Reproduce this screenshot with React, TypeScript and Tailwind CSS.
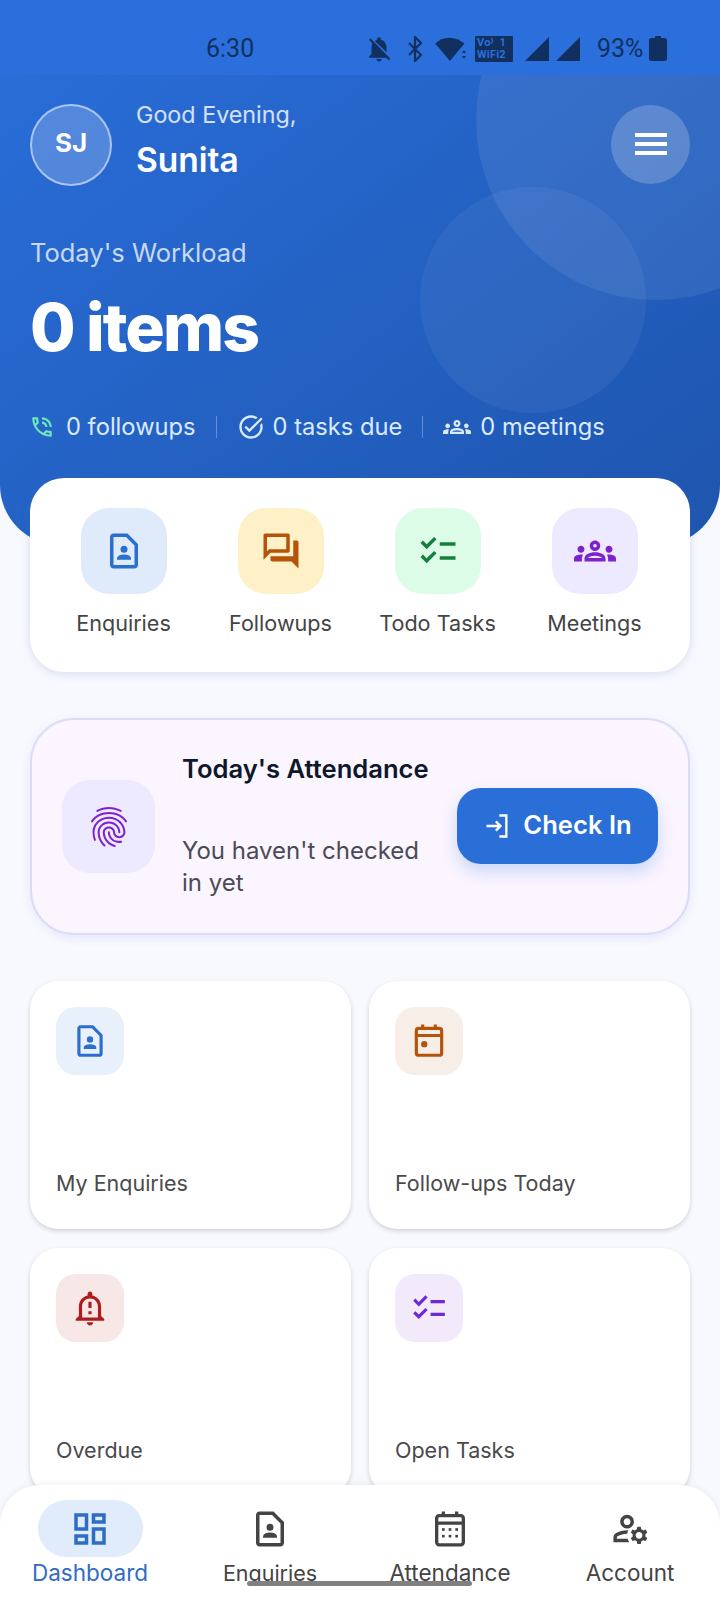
import React from "react";

const FONT = "font-['Inter','Liberation_Sans',sans-serif]";

const CONTACT = "M14 2H6c-1.1 0-2 .9-2 2v16c0 1.1.9 2 2 2h12c1.1 0 2-.9 2-2V8l-6-6zm4 18H6V4h7.17L18 8.83V20zm-6-7a2 2 0 1 0 0-4 2 2 0 0 0 0 4zm4 3.43c0-.81-.48-1.53-1.22-1.85A6.95 6.95 0 0 0 12 14c-1.01 0-1.97.21-2.78.58A2.01 2.01 0 0 0 8 16.43V17h8v-.57z";
const FORUM = "M15 4v7H5.17L4 12.17V4h11m1-2H3c-.55 0-1 .45-1 1v14l4-4h10c.55 0 1-.45 1-1V3c0-.55-.45-1-1-1zm5 4h-2v9H6v2c0 .55.45 1 1 1h11l4 4V7c0-.55-.45-1-1-1z";
const CHECKLIST = "M22 7h-9v2h9V7zm0 8h-9v2h9v-2zM5.54 11 2 7.46l1.41-1.41 2.12 2.12 4.24-4.24 1.41 1.41L5.54 11zm0 8L2 15.46l1.41-1.41 2.12 2.12 4.24-4.24 1.41 1.41L5.54 19z";
const GROUPS = "M4 13c1.1 0 2-.9 2-2s-.9-2-2-2-2 .9-2 2 .9 2 2 2zm1.13 1.1c-.37-.06-.74-.1-1.13-.1-.99 0-1.93.21-2.78.58C.48 14.9 0 15.62 0 16.43V18h4.5v-1.61c0-.83.23-1.61.63-2.29zM20 13c1.1 0 2-.9 2-2s-.9-2-2-2-2 .9-2 2 .9 2 2 2zm4 3.43c0-.81-.48-1.53-1.22-1.85-.85-.37-1.79-.58-2.78-.58-.39 0-.76.04-1.13.1.4.68.63 1.46.63 2.29V18H24v-1.57zm-7.76-2.78c-1.17-.52-2.61-.9-4.24-.9-1.63 0-3.07.39-4.24.9C6.68 14.13 6 15.21 6 16.39V18h12v-1.61c0-1.18-.68-2.26-1.76-2.74zM8.07 16c.09-.23.13-.39.91-.69.97-.38 1.99-.56 3.02-.56s2.05.18 3.02.56c.77.3.81.46.91.69H8.07zM12 8c.55 0 1 .45 1 1s-.45 1-1 1-1-.45-1-1 .45-1 1-1m0-2c-1.66 0-3 1.34-3 3s1.34 3 3 3 3-1.34 3-3-1.34-3-3-3z";
const FINGERPRINT = "M17.81 4.47c-.08 0-.16-.02-.23-.06C15.66 3.42 14 3 12.01 3c-1.98 0-3.86.47-5.57 1.41-.24.13-.54.04-.68-.2-.13-.24-.04-.55.2-.68C7.82 2.52 9.86 2 12.01 2c2.13 0 3.99.47 6.03 1.52.25.13.34.43.21.67-.09.18-.26.28-.44.28zM3.5 9.72c-.1 0-.2-.03-.29-.09-.23-.16-.28-.47-.12-.7.99-1.4 2.25-2.5 3.75-3.27C9.98 4.04 14 4.03 17.15 5.65c1.5.77 2.76 1.86 3.75 3.25.16.22.11.54-.12.7-.23.16-.54.11-.7-.12-.9-1.26-2.04-2.25-3.39-2.94-2.87-1.47-6.54-1.47-9.4.01-1.36.7-2.5 1.7-3.4 2.96-.08.14-.23.21-.39.21zm6.25 12.07c-.13 0-.26-.05-.35-.15-.87-.87-1.34-1.43-2.01-2.64-.69-1.23-1.05-2.73-1.05-4.34 0-2.97 2.54-5.39 5.66-5.39s5.66 2.42 5.66 5.39c0 .28-.22.5-.5.5s-.5-.22-.5-.5c0-2.42-2.09-4.39-4.66-4.39s-4.66 1.97-4.66 4.39c0 1.44.32 2.77.93 3.85.64 1.15 1.08 1.64 1.85 2.42.19.2.19.51 0 .71-.11.1-.24.15-.37.15zm7.17-1.85c-1.19 0-2.24-.3-3.1-.89-1.49-1.01-2.38-2.65-2.38-4.39 0-.28.22-.5.5-.5s.5.22.5.5c0 1.41.72 2.74 1.94 3.56.71.48 1.54.71 2.54.71.24 0 .64-.03 1.04-.1.27-.05.53.13.58.41.05.27-.13.53-.41.58-.57.11-1.07.12-1.21.12zM14.91 22c-.04 0-.09-.01-.13-.02-1.59-.44-2.63-1.03-3.72-2.1-1.4-1.39-2.17-3.24-2.17-5.22 0-1.62 1.38-2.94 3.08-2.94s3.08 1.32 3.08 2.94c0 1.07.93 1.94 2.08 1.94s2.08-.87 2.08-1.94c0-3.77-3.25-6.83-7.25-6.83-2.84 0-5.44 1.58-6.61 4.03-.39.81-.59 1.76-.59 2.8 0 .78.07 2.01.67 3.61.1.26-.03.55-.29.64-.26.1-.55-.04-.64-.29-.49-1.31-.73-2.61-.73-3.96 0-1.2.23-2.29.68-3.24 1.33-2.79 4.28-4.6 7.51-4.6 4.55 0 8.25 3.51 8.25 7.83 0 1.62-1.38 2.94-3.08 2.94s-3.08-1.32-3.08-2.94c0-1.07-.93-1.94-2.08-1.94s-2.08.87-2.08 1.94c0 1.71.66 3.31 1.87 4.51.95.94 1.86 1.46 3.27 1.85.27.07.42.35.35.61-.05.23-.26.38-.47.38z";
const BELL_ALERT = "M10.01 21.01c0 1.1.89 1.99 1.99 1.99s1.99-.89 1.99-1.99h-3.98zM12 6c2.76 0 5 2.24 5 5v7H7v-7c0-2.76 2.24-5 5-5zm0-4.5c-.83 0-1.5.67-1.5 1.5v1.17C7.36 4.85 5 7.65 5 11v6l-2 2v1h18v-1l-2-2v-6c0-3.35-2.36-6.15-5.5-6.83V3c0-.83-.67-1.5-1.5-1.5zM11 8h2v4h-2zm0 6h2v2h-2z";
const DASHBOARD = "M19 5v2h-4V5h4M9 5v6H5V5h4m10 8v6h-4v-6h4M9 17v2H5v-2h4M21 3h-8v6h8V3zM11 3H3v10h8V3zm10 8h-8v10h8V11zm-10 4H3v6h8v-6z";
const MANAGE = "M4 18v-.65c0-.34.16-.66.41-.81C6.1 15.53 8.03 15 10 15c.03 0 .05 0 .08.01.1-.7.3-1.37.59-1.98-.22-.02-.44-.03-.67-.03-2.42 0-4.68.67-6.61 1.82-.88.52-1.39 1.5-1.39 2.53V20h9.26c-.42-.6-.75-1.28-.97-2H4zM10 12c2.21 0 4-1.79 4-4s-1.79-4-4-4-4 1.79-4 4 1.79 4 4 4zm0-6c1.1 0 2 .9 2 2s-.9 2-2 2-2-.9-2-2 .9-2 2-2zM20.75 16c0-.22-.03-.42-.06-.63l1.14-1.01-1-1.73-1.45.49c-.32-.27-.68-.48-1.08-.63L18 11h-2l-.3 1.49c-.4.15-.76.36-1.08.63l-1.45-.49-1 1.73 1.14 1.01c-.03.21-.06.41-.06.63s.03.42.06.63l-1.14 1.01 1 1.73 1.45-.49c.32.27.68.48 1.08.63L16 21h2l.3-1.49c.4-.15.76-.36 1.08-.63l1.45.49 1-1.73-1.14-1.01c.03-.21.06-.41.06-.63zM17 18c-1.1 0-2-.9-2-2s.9-2 2-2 2 .9 2 2-.9 2-2 2z";
const TASK_ALT = "M22 5.18 10.59 16.6l-4.24-4.24 1.41-1.41 2.83 2.83 10-10L22 5.18zm-2.21 5.04c.13.57.21 1.17.21 1.78 0 4.42-3.58 8-8 8s-8-3.58-8-8 3.58-8 8-8c1.58 0 3.04.46 4.28 1.22l1.44-1.44A9.9 9.9 0 0 0 12 2C6.48 2 2 6.48 2 12s4.48 10 10 10 10-4.48 10-10c0-1.19-.22-2.33-.6-3.39l-1.61 1.61z";
const BELL_OFF = "M20 18.69 7.84 6.14 5.27 3.49 4 4.76l2.8 2.8v.01c-.52.99-.8 2.16-.8 3.42v5l-2 2v1h13.73l2 2L21 19.72l-1-1.03zM12 22c1.11 0 2-.89 2-2h-4c0 1.11.89 2 2 2zm6-7.32V11c0-3.08-1.64-5.64-4.5-6.32V4c0-.83-.67-1.5-1.5-1.5s-1.5.67-1.5 1.5v.68c-.15.03-.29.08-.42.12-.1.03-.2.07-.3.11h-.01c-.2.08-.4.17-.59.27-.2.1-.39.21-.57.32L18 14.68z";
const PHONE_TALK = "M15 12h2c0-2.76-2.24-5-5-5v2c1.66 0 3 1.34 3 3zm4 0h2c0-4.97-4.03-9-9-9v2c3.87 0 7 3.13 7 7zm1 3.5c-1.25 0-2.45-.2-3.57-.57-.1-.03-.21-.05-.31-.05-.26 0-.51.1-.71.29l-2.2 2.2c-2.83-1.44-5.15-3.75-6.59-6.59l2.2-2.21c.28-.26.36-.65.25-1C8.7 6.45 8.5 5.25 8.5 4c0-.55-.45-1-1-1H4c-.55 0-1 .45-1 1 0 9.39 7.61 17 17 17 .55 0 1-.45 1-1v-3.5c0-.55-.45-1-1-1zM5.03 5h1.5c.07.88.22 1.75.45 2.58l-1.2 1.21c-.4-1.21-.66-2.47-.75-3.79zM19 18.97c-1.32-.09-2.6-.35-3.8-.76l1.2-1.2c.85.24 1.72.39 2.6.45v1.51z";

function Icon({ d, size, className }: { d: string; size: number; className?: string }) {
  return (
    <svg width={size} height={size} viewBox="0 0 24 24" fill="currentColor" className={className}>
      <path d={d} />
    </svg>
  );
}

function EventIcon({ size }: { size: number }) {
  return (
    <svg width={size} height={size} viewBox="0 0 24 24" fill="none" stroke="currentColor" strokeWidth="2" className="text-[#b45309]">
      <rect x="4" y="4" width="16" height="17" rx="1.5" />
      <path d="M4 8.5h16M8 1.5V4M16 1.5V4" />
      <circle cx="9" cy="14" r="2" fill="currentColor" stroke="none" />
    </svg>
  );
}

function CalendarMonth({ size }: { size: number }) {
  const dots = [8, 12, 16];
  return (
    <svg width={size} height={size} viewBox="0 0 24 24" fill="none" stroke="currentColor" strokeWidth="2">
      <rect x="4" y="4" width="16" height="17.5" rx="1.5" />
      <path d="M4 8.5h16M8 1.5V4M16 1.5V4" />
      {dots.map((x) => (
        <g key={x} fill="currentColor" stroke="none">
          <rect x={x - 0.8} y="11.5" width="1.6" height="1.6" />
          <rect x={x - 0.8} y="15.5" width="1.6" height="1.6" />
        </g>
      ))}
    </svg>
  );
}

function StatusBar() {
  return (
    <div className="relative z-10 h-[75px] bg-[#2a6fdb] flex items-center text-[#12305f] font-['Roboto',sans-serif] pt-[22px]">
      <span className="ml-[206px] w-[158px] text-[25px] leading-none">6:30</span>
      <Icon d={BELL_OFF} size={30} />
      <svg width="14" height="26" viewBox="0 0 14 26" fill="none" stroke="currentColor" strokeWidth="2.2" className="ml-[14px]">
        <path d="M1 7l12 12-6 6V1l6 6L1 19" />
      </svg>
      <svg width="33" height="26" viewBox="0 0 30 24" fill="currentColor" className="ml-[13px]">
        <path d="M0 7C3.5 3.4 8 1.5 13 1.5S23 3.4 27 7L13.5 23z" />
        <path d="M24.5 15.5l2-2.5 2 2.5zM24.5 18.5l2 2.5 2-2.5z" />
      </svg>
      <div className="ml-[7px] w-[38px] h-[26px] bg-current rounded-[1px] relative">
        <span className="absolute inset-0 flex flex-col justify-center text-[#2a6fdb] text-[11px] leading-[12px] font-bold tracking-[0.2px] whitespace-nowrap pl-[2px]">
          <span>Vo⁾ &nbsp;1</span>
          <span>WiFi2</span>
        </span>
      </div>
      <svg width="26" height="26" viewBox="0 0 26 26" fill="currentColor" className="ml-[11px]">
        <path d="M25 1v24H1z" />
      </svg>
      <svg width="26" height="26" viewBox="0 0 26 26" fill="currentColor" className="ml-[5px]">
        <path d="M25 1v24H1z" />
      </svg>
      <span className="ml-[16px] text-[25px] leading-none">93%</span>
      <svg width="18" height="25" viewBox="0 0 18 25" fill="currentColor" className="ml-[6px]">
        <path d="M6 0h6v2h3.500A2.500 2.500 0 0 1 18 4.500V22.500a2.500 2.500 0 0 1-2.500 2.500h-13A2.500 2.500 0 0 1 0 22.500V4.500A2.500 2.500 0 0 1 2.500 2H6z" />
      </svg>
    </div>
  );
}

function Header() {
  return (
    <div className="relative h-[545px] overflow-hidden rounded-b-[60px] bg-linear-to-br from-[#2a6fdb] to-[#1e55ae]">
      <StatusBar />
      <div className="absolute left-[476px] top-[-60px] w-[360px] h-[360px] rounded-full bg-white/[0.08]" />
      <div className="absolute left-[420px] top-[187px] w-[226px] h-[226px] rounded-full bg-white/[0.05]" />
      <div className="relative px-[30px]">
        <div className="flex items-center h-[110px] pt-[30px]">
          <div className="w-[82px] h-[82px] rounded-full border-2 border-white/50 bg-white/20 flex items-center justify-center text-white text-[26px] font-bold pb-[6px]">
            SJ
          </div>
          <div className="ml-[24px] pb-[8px]">
            <div className="text-[23.3px] leading-[30px] text-white/80">Good Evening,</div>
            <div className="text-[33.5px] leading-[44px] mt-[8px] font-semibold text-white">Sunita</div>
          </div>
          <div className="ml-auto -mt-[2px] w-[79px] h-[79px] rounded-full bg-white/20 flex flex-col items-center justify-center gap-[5px]">
            <span className="w-[32px] h-[4px] bg-white" />
            <span className="w-[32px] h-[4px] bg-white" />
            <span className="w-[32px] h-[4px] bg-white" />
          </div>
        </div>
        <div className="mt-[52px] text-[25.5px] leading-[32px] text-white/75">Today's Workload</div>
        <div className="mt-[16px] text-[66px] leading-[84px] font-extrabold tracking-[-2px] text-white">0 items</div>
        <div className="mt-[42px] flex items-center h-[32px] text-[23.7px] text-[#dbeafe]">
          <Icon d={PHONE_TALK} size={26} className="text-[#6ee7b7] -ml-[1px]" />
          <span className="ml-[11px]">0 followups</span>
          <span className="mx-[20px] w-px h-[22px] bg-white/30" />
          <Icon d={TASK_ALT} size={28} />
          <span className="ml-[8px]">0 tasks due</span>
          <span className="mx-[20px] w-px h-[22px] bg-white/30" />
          <Icon d={GROUPS} size={28} />
          <span className="ml-[9px]">0 meetings</span>
        </div>
      </div>
    </div>
  );
}

const quick = [
  { label: "Enquiries", d: CONTACT, bg: "bg-[#dfeafb]", fg: "text-[#2a6fd0]" },
  { label: "Followups", d: FORUM, bg: "bg-[#fef1c7]", fg: "text-[#b45309]" },
  { label: "Todo Tasks", d: CHECKLIST, bg: "bg-[#dcfce7]", fg: "text-[#15803d]" },
  { label: "Meetings", d: GROUPS, bg: "bg-[#ede9fe]", fg: "text-[#7e22ce]" },
];

function QuickActions() {
  return (
    <div className="relative mx-[30px] -mt-[67px] h-[194px] rounded-[34px] bg-white shadow-[0_2px_10px_rgba(90,110,190,0.2)] flex justify-center pt-[30px] pr-[2px]">
      {quick.map((q) => (
        <div key={q.label} className="w-[157px] flex flex-col items-center">
          <div className={`w-[86px] h-[86px] rounded-[28px] flex items-center justify-center ${q.bg} ${q.fg}`}>
            <Icon d={q.d} size={42} />
          </div>
          <div className="mt-[15px] text-[21.6px] leading-[28px] text-[#444]">{q.label}</div>
        </div>
      ))}
    </div>
  );
}

function Attendance() {
  return (
    <div className="mx-[30px] mt-[46px] h-[217px] rounded-[44px] border-2 border-[#dcdaf6] bg-[#faf5ff] shadow-[0_3px_10px_rgba(99,102,241,0.12)] flex items-center px-[30px]">
      <div className="w-[93px] h-[93px] rounded-[28px] bg-[#ede9fe] flex items-center justify-center text-[#7e22ce]">
        <Icon d={FINGERPRINT} size={48} />
      </div>
      <div className="ml-[27px] w-[255px] pb-[2px]">
        <div className="text-[25.6px] leading-[32px] font-semibold text-[#0f172a] whitespace-nowrap">Today's Attendance</div>
        <div className="mt-[50px] text-[24px] leading-[32px] text-[#4b4b55] whitespace-nowrap">
          You haven't checked
          <br />
          in yet
        </div>
      </div>
      <div className="ml-auto -mt-[2px] w-[201px] h-[76px] rounded-[24px] bg-[#2a6fd8] shadow-[0_8px_16px_rgba(42,111,216,0.22)] flex items-center justify-center gap-[12px] text-white text-[25.6px] font-semibold whitespace-nowrap">
        <svg width="28" height="28" viewBox="0 0 24 24" fill="none" stroke="currentColor" strokeWidth="2">
          <path d="M14 3h6v18h-6M3 12h12M11 8l4 4-4 4" />
        </svg>
        Check In
      </div>
    </div>
  );
}

const stats = [
  { label: "My Enquiries", d: CONTACT, bg: "bg-[#e8f0fc]", fg: "text-[#2a6fd0]" },
  { label: "Follow-ups Today", d: "", bg: "bg-[#f7efe7]", fg: "text-[#b45309]" },
  { label: "Overdue", d: BELL_ALERT, bg: "bg-[#f8e7e7]", fg: "text-[#b01c1c]" },
  { label: "Open Tasks", d: CHECKLIST, bg: "bg-[#f2e9fb]", fg: "text-[#6d28d9]" },
];

function StatCards() {
  return (
    <div className="mx-[30px] mt-[46px] grid grid-cols-2 gap-x-[18px] gap-y-[19px]">
      {stats.map((s) => (
        <div key={s.label} className="h-[248px] rounded-[28px] bg-white shadow-[0_2px_5px_rgba(0,0,0,0.16)] px-[26px] pt-[26px]">
          <div className={`w-[68px] h-[68px] rounded-[20px] flex items-center justify-center ${s.bg} ${s.fg}`}>
            {s.d ? <Icon d={s.d} size={38} /> : <EventIcon size={38} />}
          </div>
          <div className="mt-[93px] text-[21.5px] leading-[30px] text-[#4a4a4a]">{s.label}</div>
        </div>
      ))}
    </div>
  );
}

function BottomNav() {
  return (
    <div className="absolute left-0 right-0 bottom-0 h-[115px] rounded-t-[40px] bg-white shadow-[0_-2px_6px_rgba(0,0,0,0.05)] flex text-[22.5px] text-[#444]">
      <div className="w-[180px] flex flex-col items-center pt-[15px] text-[#2f6cc4]">
        <div className="w-[105px] h-[57px] rounded-full bg-[#e0ecfb] flex items-center justify-center">
          <Icon d={DASHBOARD} size={42} />
        </div>
        <div className="mt-[1px] leading-[30px]">Dashboard</div>
      </div>
      <div className="w-[180px] flex flex-col items-center pt-[15px]">
        <div className="h-[57px] flex items-center"><Icon d={CONTACT} size={42} /></div>
        <div className="mt-[1px] leading-[30px] text-[21.5px]">Enquiries</div>
      </div>
      <div className="w-[180px] flex flex-col items-center pt-[15px]">
        <div className="h-[57px] flex items-center"><CalendarMonth size={40} /></div>
        <div className="mt-[1px] leading-[30px]">Attendance</div>
      </div>
      <div className="w-[180px] flex flex-col items-center pt-[15px]">
        <div className="h-[57px] flex items-center"><Icon d={MANAGE} size={41} /></div>
        <div className="mt-[1px] leading-[30px]">Account</div>
      </div>
      <div className="absolute left-[247px] bottom-[14px] w-[225px] h-[5px] rounded-full bg-[#808080]" />
    </div>
  );
}

export default function App() {
  return (
    <div className={`relative w-[720px] h-[1600px] overflow-hidden bg-[#f7f9fe] ${FONT}`}>
      <Header />
      <QuickActions />
      <Attendance />
      <StatCards />
      <BottomNav />
    </div>
  );
}
